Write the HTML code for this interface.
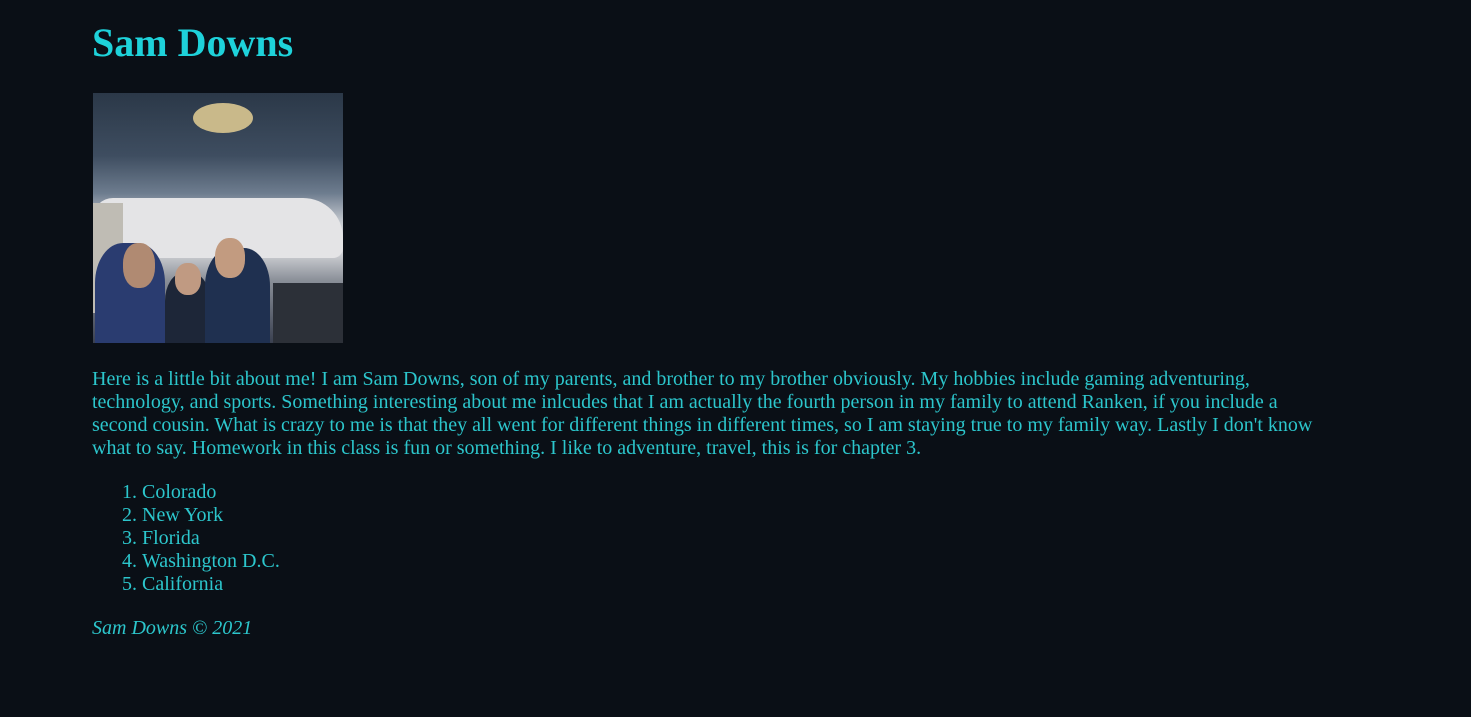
<!DOCTYPE html>
<html><head><style>
html,body{margin:0;background:#0a0f16;}
body{font-family:"Liberation Serif",serif;color:#2cc6cc;padding:0 0 0 92px;width:1240px;}
h1{font-size:40px;margin:0;padding-top:20px;line-height:46px;color:#1ed2da;}
.img{position:relative;width:250px;height:250px;margin-top:27px;margin-left:1px;overflow:hidden;background:linear-gradient(180deg,#2b3848 0%,#3e4d60 25%,#6d7c8e 40%,#c8ccd2 52%,#dcdde0 62%,#8a8f98 75%,#3a4050 100%);}
.shuttle{position:absolute;left:0;top:105px;width:250px;height:60px;background:#e4e4e6;border-radius:20px 40px 10px 0;}
.p{position:absolute;bottom:0;border-radius:40% 40% 0 0;background:#27365a;}
p{font-size:20px;line-height:23px;margin:25px 0 0;}
ol{font-size:20px;line-height:23px;margin:21px 0 0;padding-left:50px;}
.f{font-style:italic;margin-top:21px;}
</style></head><body>
<h1>Sam Downs</h1>
<div class="img">
<div class="shuttle"></div>
<div style="position:absolute;left:0;top:110px;width:30px;height:110px;background:#bfbcb4"></div>
<div style="position:absolute;left:100px;top:10px;width:60px;height:30px;background:#c9b98a;border-radius:50%"></div>
<div class="p" style="left:2px;width:70px;height:100px;background:#2a3c70"></div>
<div style="position:absolute;left:30px;top:150px;width:32px;height:45px;background:#b08a72;border-radius:45%"></div>
<div class="p" style="left:72px;width:45px;height:70px;background:#1d2638"></div>
<div style="position:absolute;left:82px;top:170px;width:26px;height:32px;background:#c09a82;border-radius:45%"></div>
<div class="p" style="left:112px;width:65px;height:95px;background:#1f3050"></div>
<div style="position:absolute;left:122px;top:145px;width:30px;height:40px;background:#c29b80;border-radius:45%"></div>
<div style="position:absolute;left:180px;top:190px;width:70px;height:60px;background:#2c3038"></div>
</div>
<p>Here is a little bit about me! I am Sam Downs, son of my parents, and brother to my brother obviously. My hobbies include gaming adventuring, technology, and sports. Something interesting about me inlcudes that I am actually the fourth person in my family to attend Ranken, if you include a second cousin. What is crazy to me is that they all went for different things in different times, so I am staying true to my family way. Lastly I don't know what to say. Homework in this class is fun or something. I like to adventure, travel, this is for chapter 3.</p>
<ol><li>Colorado</li><li>New York</li><li>Florida</li><li>Washington D.C.</li><li>California</li></ol>
<p class="f">Sam Downs © 2021</p>
</body></html>
